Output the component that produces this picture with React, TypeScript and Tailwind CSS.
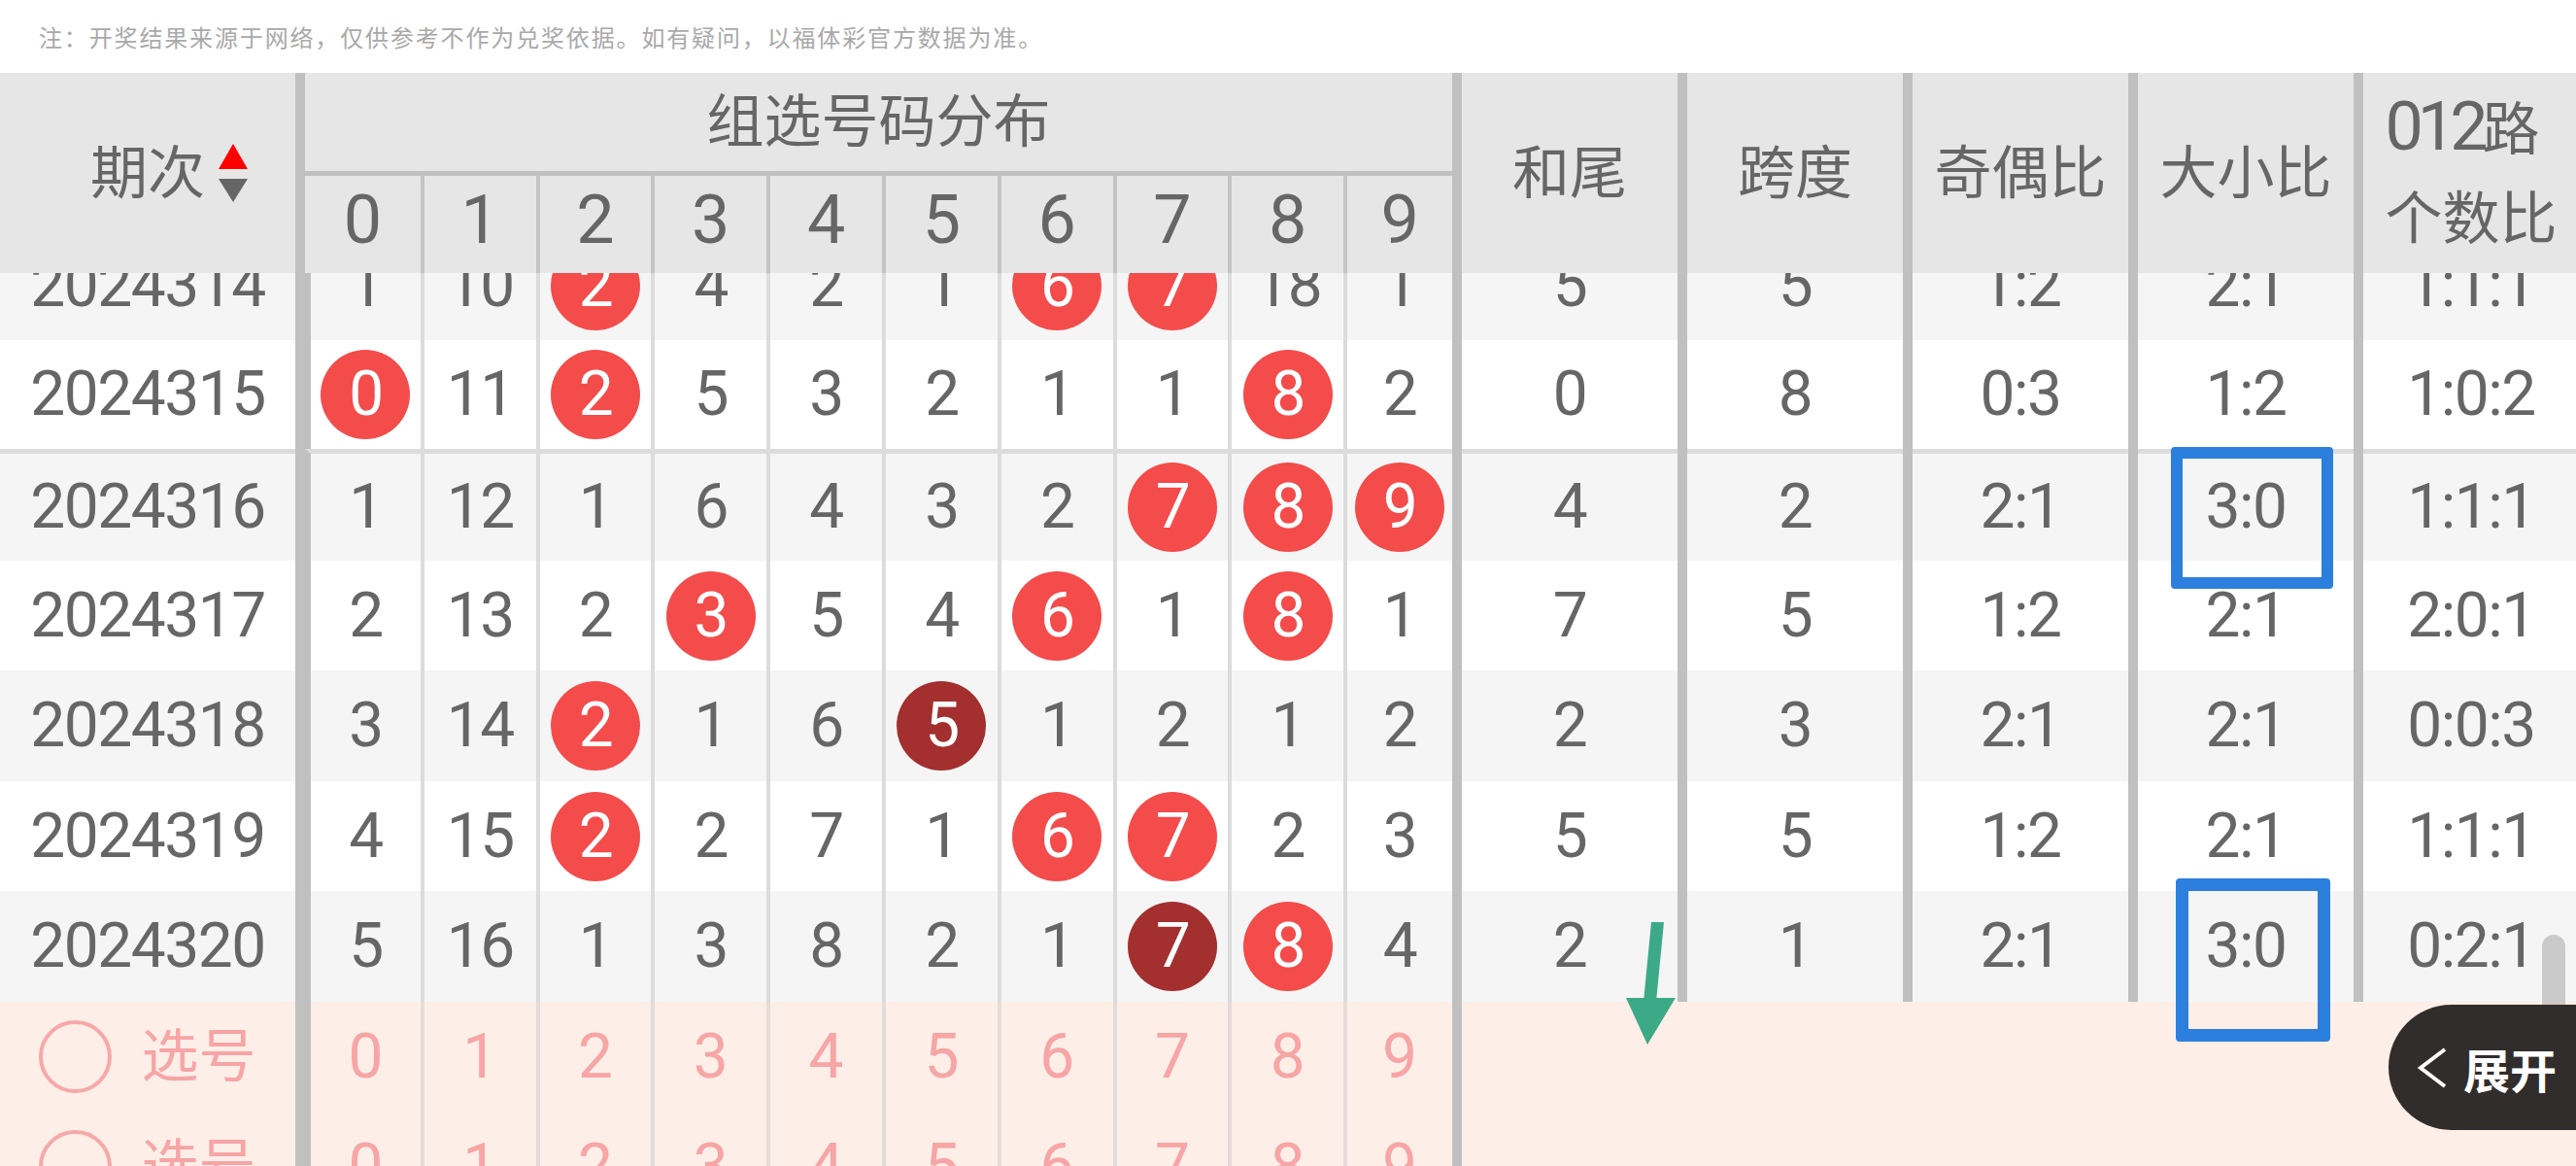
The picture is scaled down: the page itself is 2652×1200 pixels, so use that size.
import React from 'react';

type Row = { id: string; d: string[]; r: string[]; h: string; bg: string; line?: boolean };

const rows: Row[] = [
  { id: '2024314', d: ['1', '10', '*2', '4', '2', '1', '*6', '*7', '18', '1'], r: ['5', '5', '1:2', '2:1', '1:1:1'], h: 'h-[113px]', bg: 'bg-[#f5f5f5]' },
  { id: '2024315', d: ['*0', '11', '*2', '5', '3', '2', '1', '1', '*8', '2'], r: ['0', '8', '0:3', '1:2', '1:0:2'], h: 'h-[112px]', bg: 'bg-white' },
  { id: '2024316', d: ['1', '12', '1', '6', '4', '3', '2', '*7', '*8', '*9'], r: ['4', '2', '2:1', '3:0', '1:1:1'], h: 'h-[115px]', bg: 'bg-[#f5f5f5]', line: true },
  { id: '2024317', d: ['2', '13', '2', '*3', '5', '4', '*6', '1', '*8', '1'], r: ['7', '5', '1:2', '2:1', '2:0:1'], h: 'h-[113px]', bg: 'bg-white' },
  { id: '2024318', d: ['3', '14', '*2', '1', '6', '#5', '1', '2', '1', '2'], r: ['2', '3', '2:1', '2:1', '0:0:3'], h: 'h-[114px]', bg: 'bg-[#f5f5f5]' },
  { id: '2024319', d: ['4', '15', '*2', '2', '7', '1', '*6', '*7', '2', '3'], r: ['5', '5', '1:2', '2:1', '1:1:1'], h: 'h-[113px]', bg: 'bg-white' },
  { id: '2024320', d: ['5', '16', '1', '3', '8', '2', '1', '#7', '*8', '4'], r: ['2', '1', '2:1', '3:0', '0:2:1'], h: 'h-[114px]', bg: 'bg-[#f5f5f5]' },
];

const digits = ['0', '1', '2', '3', '4', '5', '6', '7', '8', '9'];
const sep = 'w-[10px] shrink-0 bg-[#c0c0c0]';

function Val({ s }: { s: string }) {
  if (s[0] === '*')
    return (
      <span className="flex h-[92px] w-[92px] items-center justify-center rounded-full bg-[#f44b4b] text-white">
        {s.slice(1)}
      </span>
    );
  if (s[0] === '#')
    return (
      <span className="flex h-[92px] w-[92px] items-center justify-center rounded-full bg-[#a32f2f] text-white">
        {s.slice(1)}
      </span>
    );
  return <span>{s}</span>;
}

function DataRow({ row }: { row: Row }) {
  const t = row.line ? 'border-t-[5px] border-t-[#dcdcdc]' : '';
  return (
    <div className={`flex ${row.h} ${row.bg}`}>
      <div className={`flex w-[304px] shrink-0 items-center justify-center ${t}`}>{row.id}</div>
      <div className={sep} />
      <div className="grid w-[1181px] shrink-0 grid-cols-[repeat(9,118.8px)_1fr]">
        {row.d.map((s, i) => (
          <div
            key={i}
            className={`flex items-center justify-center ${i === 0 ? 'border-l-[6px] border-l-[#c0c0c0]' : 'border-l-4 border-l-[#dcdcdc]'} ${t}`}
          >
            <Val s={s} />
          </div>
        ))}
      </div>
      {row.r.map((s, i) => (
        <React.Fragment key={i}>
          <div className={sep} />
          <div className={`flex w-[222px] shrink-0 items-center justify-center ${t}`}>{s}</div>
        </React.Fragment>
      ))}
    </div>
  );
}

function PinkRow() {
  return (
    <div className="flex h-[113px] bg-[#fdeee8] text-[#f7a5a5]">
      <div className="flex w-[304px] shrink-0 items-center justify-center gap-[30px]">
        <span className="h-[75px] w-[75px] rounded-full border-4 border-[#f7a8a8]" />
        <span className="text-[59px] tracking-normal">选号</span>
      </div>
      <div className={sep} />
      <div className="grid w-[1181px] shrink-0 grid-cols-[repeat(9,118.8px)_1fr]">
        {digits.map((d, i) => (
          <div
            key={i}
            className={`flex items-center justify-center ${i === 0 ? 'border-l-[6px] border-l-[#c0c0c0]' : 'border-l-4 border-l-[#e4dcd9]'}`}
          >
            {d}
          </div>
        ))}
      </div>
      <div className={sep} />
      <div className="flex-1" />
    </div>
  );
}

export default function App() {
  return (
    <div className="relative h-[1200px] w-[2652px] overflow-hidden bg-white font-['Roboto','Noto_Sans_CJK_SC',sans-serif] text-[#666666]">
      <div className="w-[2655px]">
        {/* note */}
        <div className="flex h-[75px] items-center pl-[40px] font-['Noto_Sans_CJK_SC',sans-serif] text-[24px] tracking-[1.85px] text-[#a9a9a9]">
          注：开奖结果来源于网络，仅供参考不作为兑奖依据。如有疑问，以福体彩官方数据为准。
        </div>

        {/* header */}
        <div className="flex h-[206px] bg-[#e6e6e6] leading-none">
          <div className="flex w-[304px] shrink-0 items-center justify-center">
            <div className="w-[44px]" />
            <span className="text-[59px]">期次</span>
            <div className="flex w-[44px] flex-col items-end gap-[10px]">
              <svg width="30" height="26" viewBox="0 0 30 26">
                <polygon points="15,0 30,26 0,26" fill="#ff0000" />
              </svg>
              <svg width="30" height="24" viewBox="0 0 30 24">
                <polygon points="0,0 30,0 15,24" fill="#666666" />
              </svg>
            </div>
          </div>
          <div className={sep} />
          <div className="flex w-[1181px] shrink-0 flex-col">
            <div className="flex h-[101px] items-center justify-center text-[59px]">组选号码分布</div>
            <div className="h-[5px] bg-[#c0c0c0]" />
            <div className="grid flex-1 grid-cols-[repeat(9,118.8px)_1fr]">
              {digits.map((d, i) => (
                <div
                  key={d}
                  className={`flex items-center justify-center pb-[10px] text-[70px] ${i > 0 ? 'border-l-4 border-l-[#c4c4c4]' : ''}`}
                >
                  {d}
                </div>
              ))}
            </div>
          </div>
          {['和尾', '跨度', '奇偶比', '大小比'].map((h) => (
            <React.Fragment key={h}>
              <div className={sep} />
              <div className="flex w-[222px] shrink-0 items-center justify-center text-[59px]">{h}</div>
            </React.Fragment>
          ))}
          <div className={sep} />
          <div className="flex w-[222px] shrink-0 items-center justify-center">
            <div className="text-left text-[59px] leading-[92px]">
              <div>
                <span className="text-[70px] tracking-[-6px]">012</span>路
              </div>
              <div>个数比</div>
            </div>
          </div>
        </div>

        {/* body */}
        <div className="h-[750px] overflow-hidden text-[64px] leading-none tracking-[-1.5px]">
          <div className="-mt-[44px]">
            {rows.map((r) => (
              <DataRow key={r.id} row={r} />
            ))}
          </div>
        </div>

        {/* pink selection rows */}
        <div className="text-[64px] leading-none">
          <PinkRow />
          <PinkRow />
        </div>
      </div>

      {/* annotations */}
      <div className="absolute left-[2235px] top-[460px] h-[146px] w-[167px] rounded-[4px] border-[12px] border-[#2d7fdd]" />
      <div className="absolute left-[2240px] top-[904px] h-[168px] w-[159px] rounded-[4px] border-[13px] border-[#2d7fdd]" />

      <svg className="absolute left-[1670px] top-[945px]" width="60" height="135" viewBox="0 0 60 135">
        <polygon points="30,4 43,4 35,86 22,86" fill="#3caa87" />
        <polygon points="4,82 55,82 26,130" fill="#3caa87" />
      </svg>

      {/* scrollbar */}
      <div className="absolute left-[2617px] top-[962px] h-[150px] w-[24px] rounded-full bg-[rgba(150,150,150,0.45)]" />

      {/* expand button */}
      <div className="absolute left-[2459px] top-[1034px] flex h-[129px] w-[220px] items-center rounded-l-full bg-[#312d2c] pl-[29px] text-white">
        <svg width="32" height="42" viewBox="0 0 32 42" className="shrink-0">
          <polyline points="29,2 4,21 29,40" fill="none" stroke="#ffffff" strokeWidth="4" />
        </svg>
        <span className="ml-[16px] font-['Noto_Sans_CJK_SC',sans-serif] text-[48px] font-bold leading-none">展开</span>
      </div>
    </div>
  );
}
